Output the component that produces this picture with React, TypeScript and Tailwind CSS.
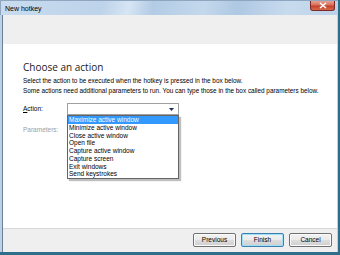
import React from "react";

const items = [
  "Maximize active window",
  "Minimize active window",
  "Close active window",
  "Open file",
  "Capture active window",
  "Capture screen",
  "Exit windows",
  "Send keystrokes",
];

function Btn({ label, def }: { label: string; def?: boolean }) {
  return (
    <div
      className={`w-[43px] h-[14px] flex items-center justify-center rounded-[2px] border text-[6.5px] text-black ${
        def ? "border-[#3c7fb1] shadow-[inset_0_0_0_1px_#9fe0f9]" : "border-[#707070] shadow-[inset_0_0_0_1px_#fbfbfb]"
      } bg-[linear-gradient(#f2f2f2_0%,#ebebeb_48%,#dddddd_52%,#cfcfcf_100%)]`}
    >
      {label}
    </div>
  );
}

export default function App() {
  return (
    <div
      className="w-[340px] h-[255px] flex flex-col overflow-hidden bg-[#bcd1e8] border-r-[2px] border-[#2e6e8a]"
      style={{ fontFamily: '"Liberation Sans", Arial, sans-serif' }}
    >
      {/* title bar */}
      <div className="relative h-[15px] shrink-0 flex items-center pl-[4px] bg-[linear-gradient(100deg,#c9dcef_0%,#bdd3ea_30%,#d6e5f3_38%,#b3cbe5_45%,#c4d8ec_60%,#aec8e3_70%,#c8dbee_85%,#bcd2ea_100%)] border-t border-l border-[#8ea6c0]">
        <span className="text-[7px] text-black leading-none">New hotkey</span>
        <div className="absolute right-[3px] top-0 w-[25px] h-[10px] rounded-b-[3px] border border-t-0 border-[#7a2a22] bg-[linear-gradient(#e8a08f_0%,#d8705c_45%,#c3402a_55%,#d66a4e_100%)] flex items-center justify-center">
          <svg width="8" height="7" viewBox="0 0 8 7">
            <path d="M1 1 L7 6 M7 1 L1 6" stroke="#ffffff" strokeWidth="1.6" />
          </svg>
        </div>
      </div>
      {/* client */}
      <div className="flex-1 flex flex-col ml-[2px] mr-[1px] border-l border-[#6d7f94] bg-white">
        <div className="h-[29px] shrink-0 bg-[#efefef]" />
        <div className="flex-1 bg-white pl-[20px] pt-[17px]">
          <div className="text-[10px] leading-[12px] text-[#1a1a1a]" style={{ fontFamily: '"Open Sans", "Noto Sans", sans-serif' }}>
            Choose an action
          </div>
          <div className="mt-[3px] text-[6.4px] leading-[10px] text-black whitespace-nowrap">
            <div>Select the action to be executed when the hotkey is pressed in the box below.</div>
            <div>Some actions need additional parameters to run. You can type those in the box called parameters below.</div>
          </div>
          <div className="mt-[7px] flex items-center">
            <div className="w-[44px] text-[6.5px] text-black">
              <span className="underline">A</span>ction:
            </div>
            <div className="relative w-[112px] h-[12px] border border-[#a0a0a0] bg-white">
              <svg className="absolute right-[4px] top-[4px]" width="5" height="3" viewBox="0 0 5 3">
                <path d="M0 0 H5 L2.5 3 Z" fill="#1c2a5a" />
              </svg>
              <div className="absolute left-[-1px] top-[11px] w-[112px] border border-[#646464] bg-white shadow-[2px_2px_1px_rgba(0,0,0,0.25)] z-10 flex flex-col">
                {items.map((t, i) => (
                  <div
                    key={t}
                    className={`h-[7.75px] leading-[7.75px] text-[6.5px] pl-[1px] whitespace-nowrap ${
                      i === 0 ? "bg-[#3399ff] text-white" : "text-black"
                    }`}
                  >
                    {t}
                  </div>
                ))}
              </div>
            </div>
          </div>
          <div className="mt-[10px] text-[6.5px] text-[#a0a0a0]">Parameters:</div>
        </div>
        <div className="h-[24px] shrink-0 border-t border-[#d8d8d8] bg-[#efefef] flex justify-end items-start pt-[4px] pr-[5px] gap-[5px]">
          <Btn label="Previous" />
          <Btn label="Finish" def />
          <Btn label="Cancel" />
        </div>
      </div>
      <div className="h-[3px] shrink-0 bg-[#2e6e8a]" />
    </div>
  );
}
